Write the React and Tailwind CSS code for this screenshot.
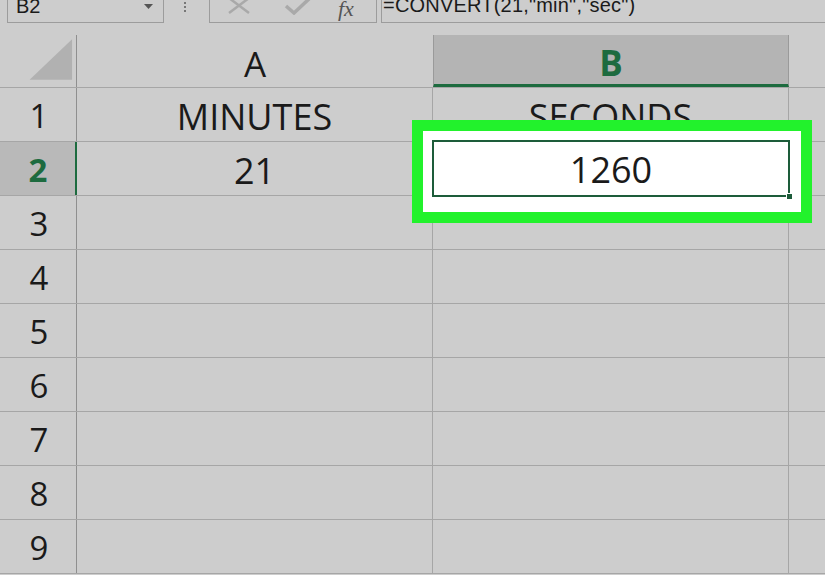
import React from 'react';

const rows = [1, 2, 3, 4, 5, 6, 7, 8, 9];

const cellValues = {
  1: { a: 'MINUTES', b: 'SECONDS' },
  2: { a: '21', b: '' },
};

const App = () => {
  return (
    <div
      className="relative w-[825px] h-[575px] overflow-hidden bg-[#cdcdcd] text-[#1a1a1a]"
      style={{ fontFamily: '"Open Sans", "Noto Sans", sans-serif' }}
    >
      {/* Formula bar */}
      <div className="flex items-start h-[35px]">
        <div className="ml-[7px] w-[157px] h-[23px] border-x border-b border-[#9c9c9c] flex items-start justify-between pl-[8px] pr-[10px]">
          <span className="text-[20px] leading-[20px] -mt-[4px]" style={{ fontFamily: '"Liberation Sans", sans-serif' }}>B2</span>
          <svg width="9" height="6" viewBox="0 0 9 6" className="mt-[4px]">
            <polygon points="0,0 9,0 4.5,5" fill="#555" />
          </svg>
        </div>
        <div className="ml-[20px] mt-[2px] flex flex-col gap-[2px]">
          <span className="block w-[2px] h-[2px] bg-[#777]" />
          <span className="block w-[2px] h-[2px] bg-[#777]" />
          <span className="block w-[2px] h-[2px] bg-[#777]" />
        </div>
        <div className="ml-[23px] w-[168px] h-[23px] border-x border-b border-[#9c9c9c] flex items-start">
          <svg width="24" height="16" viewBox="0 0 24 16" className="ml-[17px] -mt-[2px]">
            <path d="M2 0 L22 15 M22 0 L2 15" stroke="#a9a9a9" strokeWidth="2.5" fill="none" />
          </svg>
          <svg width="28" height="17" viewBox="0 0 28 17" className="ml-[33px] -mt-[2px]">
            <path d="M2 8 L10 15 L26 0" stroke="#a9a9a9" strokeWidth="3.5" fill="none" />
          </svg>
          <span
            className="ml-[26px] -mt-[2px] text-[22px] leading-[22px] italic text-[#555]"
            style={{ fontFamily: '"Liberation Serif", serif' }}
          >
            fx
          </span>
        </div>
        <div className="ml-[4px] flex-1 h-[23px] border-l border-b border-[#9c9c9c] flex items-start">
          <span className="pl-[1px] text-[20px] leading-[20px] -mt-[5px] tracking-[0.2px]" style={{ fontFamily: '"Liberation Sans", sans-serif' }}>
            =CONVERT(21,"min","sec")
          </span>
        </div>
      </div>

      {/* Column headers */}
      <div className="flex h-[53px] border-b border-[#a6a6a6]">
        <div className="w-[77px] shrink-0 border-r border-[#8f8f8f] flex items-end pb-[4px]">
          <svg width="77" height="45" viewBox="0 0 77 45">
            <polygon points="30,42 73,42 73,1" fill="#b1b1b1" />
          </svg>
        </div>
        <div className="w-[356px] shrink-0 flex items-center justify-center text-[35px] leading-none pt-[5px]">
          A
        </div>
        <div className="w-[356px] shrink-0 bg-[#b4b4b4] border-x border-[#9a9a9a] border-b-[3px] border-b-[#1d6b3f] flex items-center justify-center text-[35px] leading-none font-bold text-[#1d6b3f] pt-[5px]">
          B
        </div>
        <div className="flex-1" />
      </div>

      {/* Rows */}
      {rows.map((r) => (
        <div key={r} className="flex h-[54px] border-b border-[#a6a6a6]">
          <div
            className={
              r === 2
                ? 'w-[77px] shrink-0 bg-[#b9b9b9] border-r-2 border-[#1d6b3f] flex items-center justify-center text-[33px] font-bold text-[#1d6b3f] pl-[1px] pt-[3px]'
                : 'w-[77px] shrink-0 border-r border-[#8f8f8f] flex items-center justify-center text-[33px] pl-[2px] pt-[3px]'
            }
          >
            {r}
          </div>
          <div className="w-[356px] shrink-0 border-r border-[#a6a6a6] flex items-center justify-center text-[36px] pt-[4px]">
            {cellValues[r]?.a}
          </div>
          <div className="w-[356px] shrink-0 border-r border-[#a6a6a6] flex items-center justify-center text-[36px] pt-[4px]">
            {cellValues[r]?.b}
          </div>
          <div className="flex-1" />
        </div>
      ))}

      {/* Highlight over the selected cell */}
      <div className="absolute left-[412px] top-[120px] w-[400px] h-[103px] border-[11px] border-[#22f22c] bg-white">
        <div className="absolute left-[9px] top-[9px] w-[358px] h-[57px] border-2 border-[#1d5c3a] flex items-center justify-center text-[36px] pt-[3px]">
          1260
          <span className="absolute -right-[5px] -bottom-[5px] w-[7px] h-[7px] bg-[#1d5c3a] border border-white" />
        </div>
      </div>
    </div>
  );
};

export default App;
